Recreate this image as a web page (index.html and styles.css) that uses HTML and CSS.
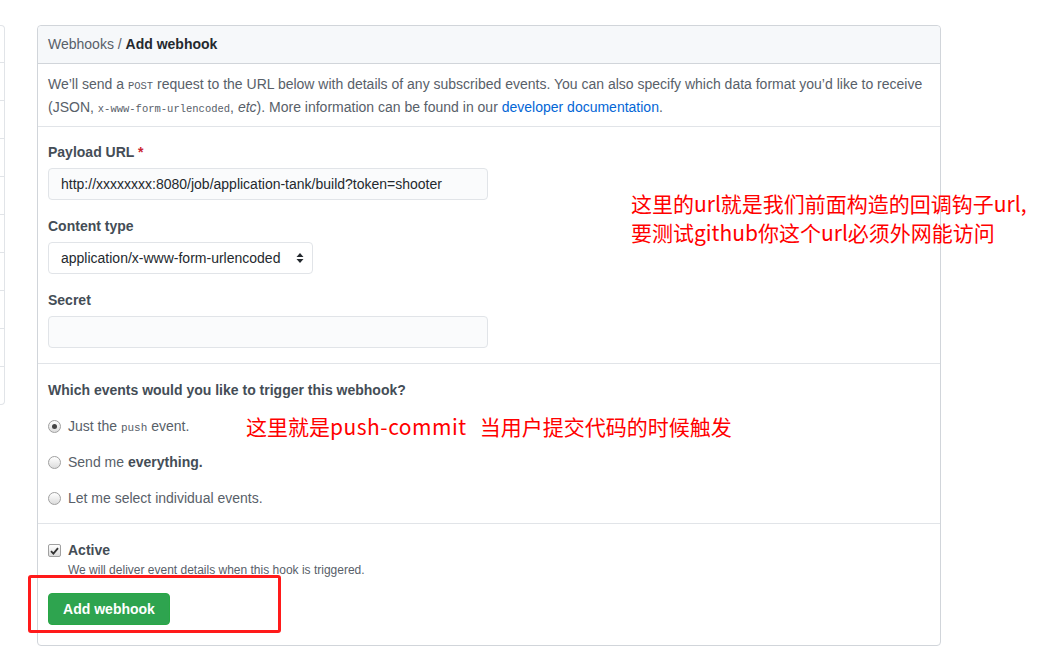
FILE: index.html
```html
<!DOCTYPE html>
<html lang="en">
<head>
<meta charset="utf-8">
<title>Add webhook</title>
<link rel="stylesheet" href="styles.css">
</head>
<body>
<div class="page">
  <div class="sidebar">
    <div class="side-row"></div><div class="side-row"></div><div class="side-row"></div>
    <div class="side-row"></div><div class="side-row"></div><div class="side-row"></div>
    <div class="side-row"></div><div class="side-row"></div><div class="side-row"></div>
    <div class="side-row last"></div>
  </div>
  <div class="box">
    <div class="box-header"><span class="crumb">Webhooks</span> <span class="sep">/</span> <strong>Add webhook</strong></div>
    <div class="box-section desc">
      We’ll send a <code class="tiny">POST</code> request to the URL below with details of any subscribed events. You can also specify which data format you’d like to receive<br>(JSON, <code class="tiny">x-www-form-urlencoded</code>, <em>etc</em>). More information can be found in our <a href="#">developer documentation</a>.
    </div>
    <div class="box-section form">
      <div class="group">
        <label class="label">Payload URL <span class="req">*</span></label>
        <div class="input wide">http://xxxxxxxx:8080/job/application-tank/build?token=shooter</div>
      </div>
      <div class="group">
        <label class="label">Content type</label>
        <div class="select">application/x-www-form-urlencoded
          <svg class="arrows" width="8" height="12" viewBox="0 0 8 12"><path d="M4 1 L7.5 5 H0.5 Z M4 11 L7.5 7 H0.5 Z" fill="#24292e"/></svg>
        </div>
      </div>
      <div class="group">
        <label class="label">Secret</label>
        <div class="input wide"></div>
      </div>
    </div>
    <div class="box-section events">
      <div class="q">Which events would you like to trigger this webhook?</div>
      <div class="radio-row"><span class="radio checked"></span><span>Just the <code class="tiny push">push</code> event.</span></div>
      <div class="radio-row"><span class="radio"></span><span>Send me <strong class="semi">everything.</strong></span></div>
      <div class="radio-row"><span class="radio"></span><span>Let me select individual events.</span></div>
    </div>
    <div class="box-section active">
      <div class="check-row"><span class="checkbox"><svg width="9" height="8" viewBox="0 0 9 8"><path d="M1 4.2 L3.4 6.6 L8 1.2" stroke="#333" stroke-width="1.8" fill="none"/></svg></span><span class="active-label">Active</span></div>
      <div class="note">We will deliver event details when this hook is triggered.</div>
      <button class="btn">Add webhook</button>
    </div>
  </div>
  <div class="note-red n1">这里的url就是我们前面构造的回调钩子url,<br>要测试github你这个url必须外网能访问</div>
  <div class="note-red n2">这里就是<span class="lat">push-commit</span><span class="gap"></span>当用户提交代码的时候触发</div>
  <div class="redbox"></div>
</div>
</body>
</html>
```
FILE: styles.css
```css
* { box-sizing: border-box; }
html, body { margin: 0; padding: 0; background: #fff; }
body {
  font-family: "Liberation Sans", Arial, sans-serif;
  font-size: 14px;
  color: #24292e;
}
.page {
  position: relative;
  display: flex;
  align-items: flex-start;
  gap: 32px;
  padding-top: 25px;
  width: 1042px;
  height: 660px;
  overflow: hidden;
}
.sidebar {
  width: 5px;
  border: 1px solid #e1e4e8;
  border-left: none;
  border-radius: 0 4px 4px 0;
}
.side-row { height: 38px; border-bottom: 1px solid #e1e4e8; }
.side-row:first-child { height: 37px; }
.side-row.last { border-bottom: none; height: 37px; }
.box {
  width: 904px;
  border: 1px solid #d1d5da;
  border-radius: 4px;
}
.box-header {
  height: 38px;
  line-height: 37px;
  padding: 0 10px;
  background: #f6f8fa;
  border-bottom: 1px solid #d1d5da;
  border-radius: 4px 4px 0 0;
  color: #586069;
}
.box-header strong { color: #24292e; font-weight: 700; }
.box-section { padding: 10px; border-bottom: 1px solid #e1e4e8; }
.box-section:last-child { border-bottom: none; }
.desc { color: #586069; line-height: 21px; height: 63px; }
.desc a { color: #0366d6; text-decoration: none; }
.tiny { font-family: "Liberation Mono", "DejaVu Sans Mono", monospace; font-size: 10.5px; }
.form { padding: 15px 10px 15px; }
.group { margin-bottom: 16px; }
.group:last-child { margin-bottom: 0; }
.label { display: block; font-weight: 700; color: #444d56; line-height: 21px; margin-bottom: 5px; }
.req { color: #cb2431; }
.input {
  height: 32px;
  line-height: 30px;
  padding: 0 12px;
  background: #fafbfc;
  border: 1px solid #e1e4e8;
  border-radius: 4px;
  color: #24292e;
}
.wide { width: 440px; }
.select {
  display: flex;
  align-items: center;
  justify-content: space-between;
  width: 265px;
  height: 32px;
  padding: 0 8px 0 12px;
  background: #fff;
  border: 1px solid #e1e4e8;
  border-radius: 4px;
  color: #24292e;
}
.arrows { flex: none; }
.events { padding: 16px 10px 14px; display: flex; flex-direction: column; gap: 15px; }
.q { font-weight: 700; color: #444d56; line-height: 21px; height: 21px; }
.radio-row { display: flex; align-items: center; gap: 7px; height: 21px; line-height: 21px; color: #586069; }
.radio {
  width: 13px; height: 13px;
  border: 1px solid #a0a0a0;
  border-radius: 50%;
  background: linear-gradient(#fff, #dcdcdc);
  display: flex; align-items: center; justify-content: center;
  flex: none;
}
.radio.checked::after {
  content: "";
  width: 5px; height: 5px; border-radius: 50%;
  background: #444;
}
.push { font-size: 11px; line-height: 1; }
.semi { color: #444d56; font-weight: 600; }
.active { padding: 16px 10px 20px; }
.check-row { display: flex; align-items: center; gap: 7px; line-height: 21px; }
.checkbox {
  width: 13px; height: 13px; flex: none;
  border: 1px solid #a0a0a0; border-radius: 2px;
  background: linear-gradient(#fff, #dcdcdc);
  display: flex; align-items: center; justify-content: center;
}
.active-label { font-weight: 700; color: #444d56; }
.note { font-size: 12px; line-height: 18px; color: #586069; padding-left: 20px; }
.btn {
  margin-top: 14px;
  height: 32px;
  width: 122px;
  border: 1px solid #28a745;
  border-radius: 4px;
  background: #2ea44f;
  color: #fff;
  font-family: inherit;
  font-size: 14px;
  font-weight: 700;
  padding: 0;
}
.note-red {
  position: absolute;
  font-family: "Noto Sans CJK SC", sans-serif;
  font-size: 21px;
  line-height: 29px;
  color: #ff0000;
  white-space: nowrap;
}
.n1 { left: 631px; top: 189px; }
.n2 { left: 246px; top: 412px; }
.lat { letter-spacing: 0.5px; }
.gap { display: inline-block; width: 13px; }
.redbox {
  position: absolute;
  left: 28px; top: 575px;
  width: 253px; height: 58px;
  border: 3px solid #ff1a1a;
  border-radius: 3px;
}
```
